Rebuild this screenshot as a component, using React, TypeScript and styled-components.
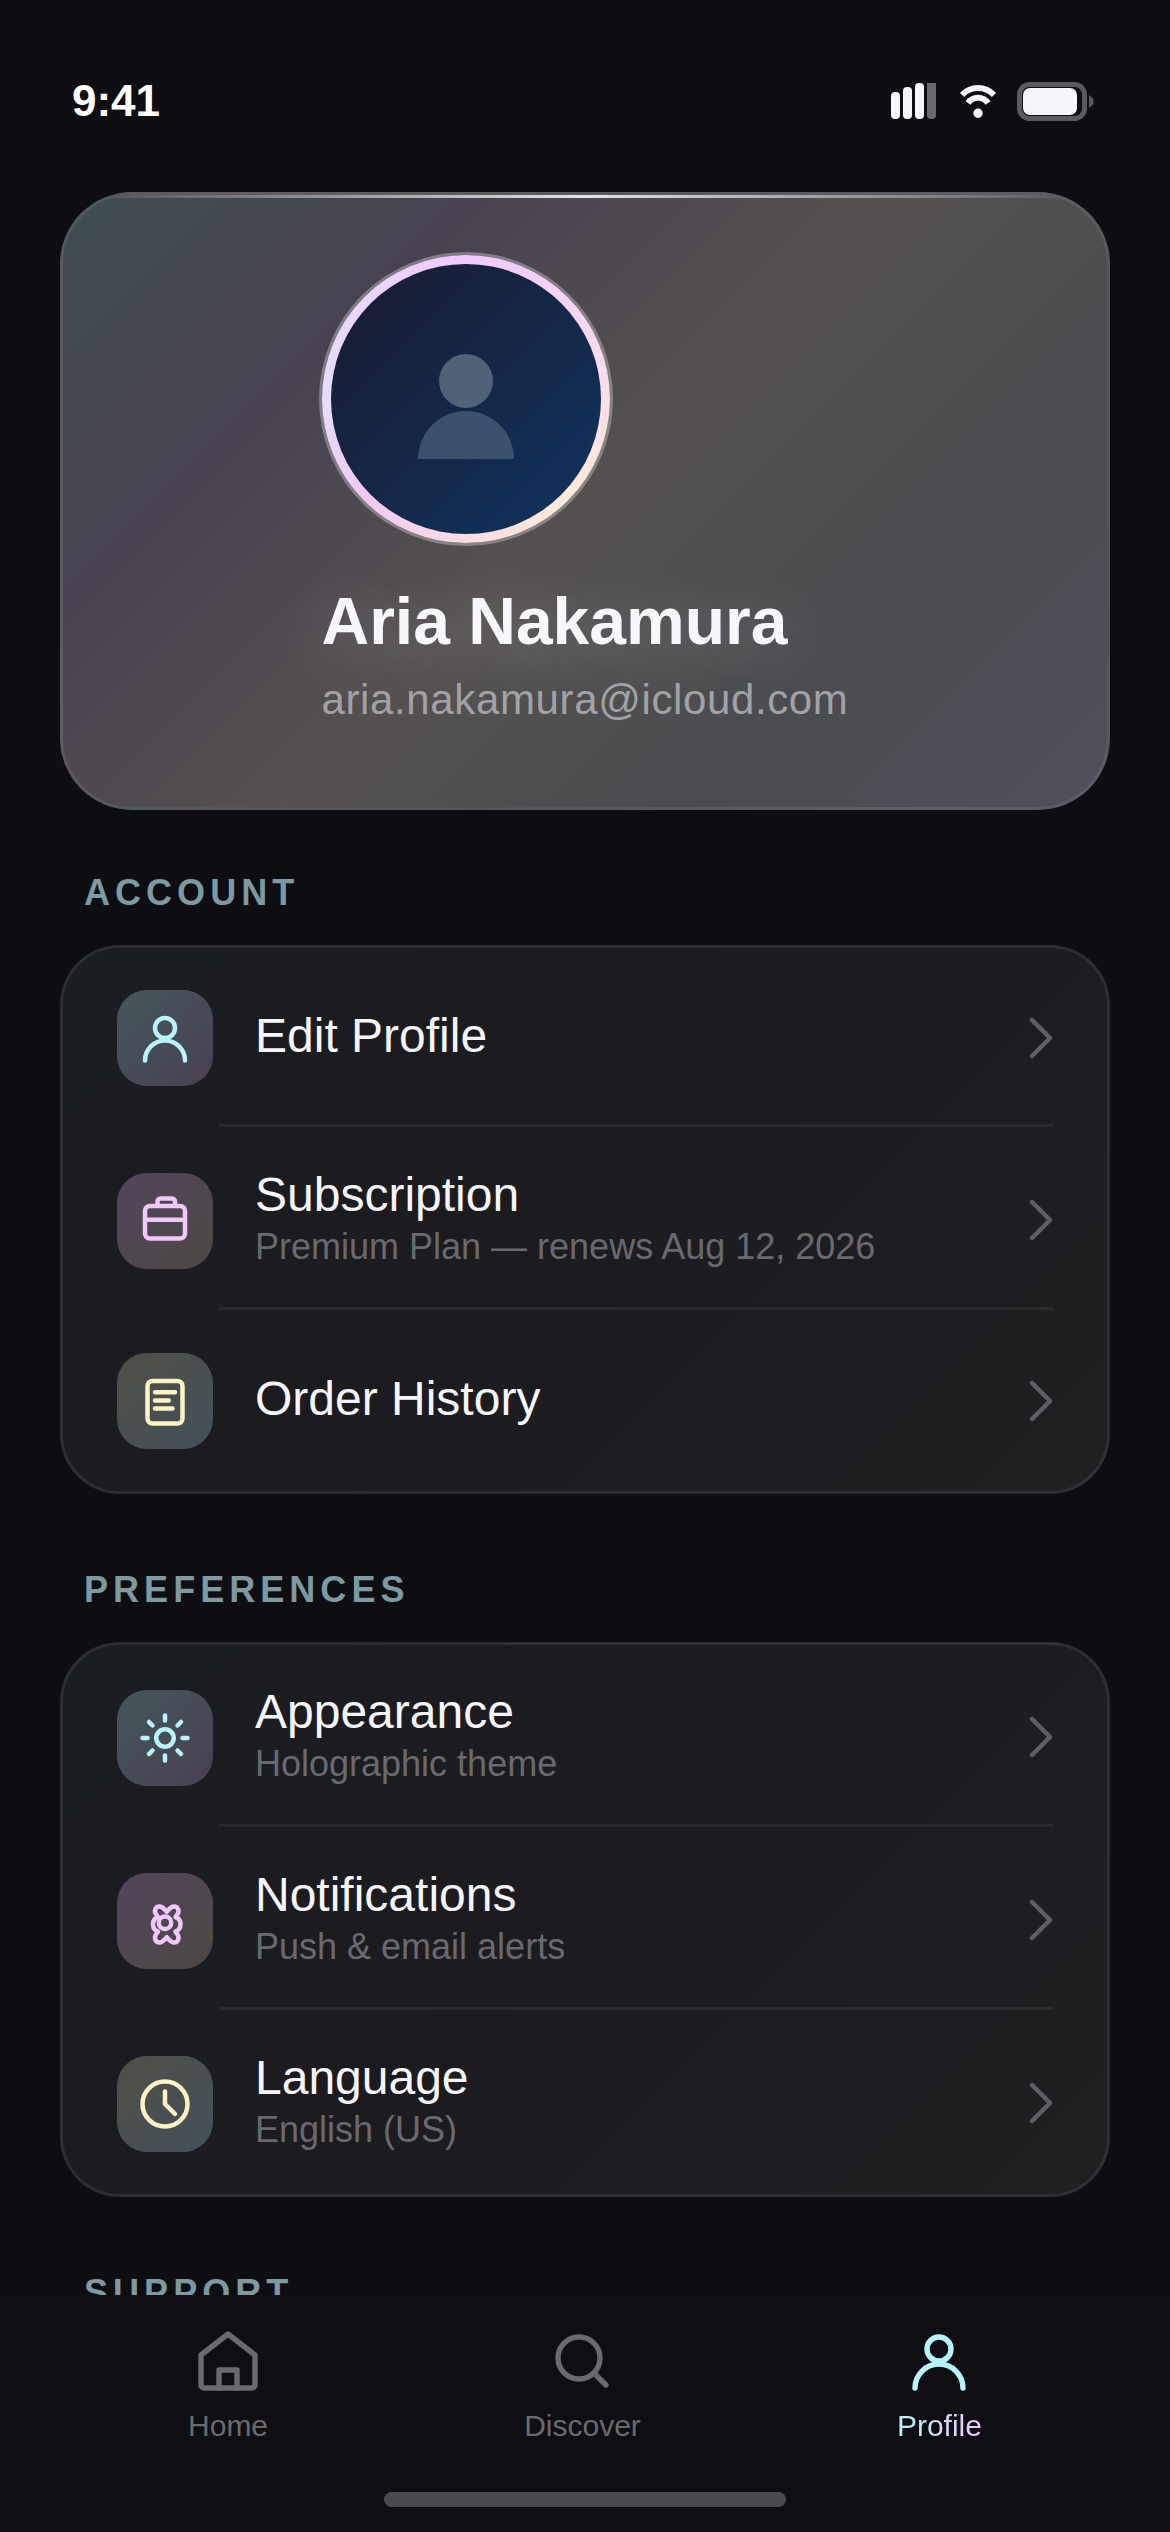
import React from "react";
import styled, { createGlobalStyle } from "styled-components";

const GlobalStyle = createGlobalStyle`
  html, body {
    margin: 0;
    padding: 0;
    background: #0d0d12;
  }
  * {
    box-sizing: border-box;
  }
`;

type Tint = "mint" | "pink" | "cream";

const tints: Record<Tint, { stroke: string; tile: string }> = {
  mint: { stroke: "#b8f4ff", tile: "linear-gradient(135deg, #44575b, #4a4050)" },
  pink: { stroke: "#f0c8ff", tile: "linear-gradient(135deg, #52465c, #4c4843)" },
  cream: { stroke: "#fff3c4", tile: "linear-gradient(135deg, #504f47, #43505a)" },
};

const Screen = styled.div`
  width: 1170px;
  height: 2532px;
  display: flex;
  flex-direction: column;
  overflow: hidden;
  background: #0d0d12;
  font-family: "Liberation Sans", Arial, sans-serif;
  color: #f5f5fa;
`;

const Scroll = styled.main`
  flex: 1;
  min-height: 0;
  overflow: hidden;
`;

const StatusBar = styled.header`
  height: 192px;
  padding: 76px 72px 0;
  display: flex;
  justify-content: space-between;
  align-items: flex-start;
`;

const Clock = styled.span`
  font-size: 44px;
  font-weight: 700;
  color: #ffffff;
`;

const StatusIcons = styled.div`
  display: flex;
  gap: 21px;
  align-items: center;
  height: 50px;
`;

const Hero = styled.section`
  position: relative;
  margin: 0 60px 62px;
  height: 618px;
  padding: 60px 0 0;
  display: flex;
  justify-content: center;
  border: 3px solid rgba(255, 255, 255, 0.08);
  border-radius: 72px;
  overflow: hidden;
  background: linear-gradient(135deg, #3f4d50 0%, #484250 25%, #555150 50%, #4a4c50 75%, #534f5c 100%);

  &::before {
    content: "";
    position: absolute;
    top: 0;
    left: 0;
    right: 0;
    height: 3px;
    background: linear-gradient(90deg, transparent, rgba(255, 255, 255, 0.85), transparent);
  }
`;

const HeroInner = styled.div`
  display: flex;
  flex-direction: column;
  align-items: flex-start;
`;

const AvatarRing = styled.div`
  width: 288px;
  height: 288px;
  padding: 9px;
  border-radius: 50%;
  background: conic-gradient(#efc9ff 0deg, #fadfe6 90deg, #ffead8 135deg, #fbdde4 180deg, #f0c9f2 225deg, #e6dcff 270deg, #ead6ff 315deg, #efc9ff 360deg);
  box-shadow: 0 0 0 3px rgba(255, 255, 255, 0.3);
`;

const Avatar = styled.div`
  width: 100%;
  height: 100%;
  border-radius: 50%;
  display: flex;
  align-items: center;
  justify-content: center;
  background: linear-gradient(135deg, #1a1a2e, #0f3460);
`;

const Name = styled.h1`
  margin: 40px 0 0;
  font-size: 66px;
  font-weight: 700;
  color: #f8f8fc;
  text-shadow: 0 8px 60px rgba(255, 255, 255, 0.25);
`;

const Email = styled.p`
  margin: 17px 0 0;
  font-size: 42px;
  letter-spacing: 0.63px;
  color: #a2a2a6;
`;

const Group = styled.section`
  margin-bottom: 75px;
`;

const GroupLabel = styled.h2`
  margin: 0 0 31px;
  padding-left: 84px;
  font-size: 36px;
  font-weight: 700;
  letter-spacing: 5.04px;
  color: #7c9aa0;
`;

const Card = styled.div`
  margin: 0 60px;
  border: 3px solid rgba(255, 255, 255, 0.08);
  border-radius: 60px;
  overflow: hidden;
  background: linear-gradient(135deg, #1a1d21, #1c1b20 50%, #201f21);
`;

const Row = styled.div<{ $hasSub: boolean }>`
  height: ${(p) => (p.$hasSub ? "183px" : "180px")};
  padding: 0 54px;
  display: flex;
  align-items: center;
  gap: 42px;
`;

const Divider = styled.div`
  height: 3px;
  margin: -4px 54px 1px 156px;
  background: rgba(255, 255, 255, 0.06);
`;

const Tile = styled.div<{ $tint: Tint; $hasSub: boolean }>`
  flex: none;
  width: 96px;
  height: 96px;
  margin-top: ${(p) => (p.$hasSub ? "2px" : "0")};
  border-radius: 30px;
  display: flex;
  align-items: center;
  justify-content: center;
  background: ${(p) => tints[p.$tint].tile};
`;

const RowText = styled.div`
  flex: 1;
  min-width: 0;
  margin-bottom: 5px;
`;

const RowTitle = styled.div`
  font-size: 48px;
  color: #f5f5fa;
`;

const RowSub = styled.div`
  margin-top: 4px;
  font-size: 36px;
  color: #69696f;
`;

const LineIcon = styled.svg<{ $size: number; $color: string }>`
  display: block;
  flex: none;
  width: ${(p) => p.$size}px;
  height: ${(p) => p.$size}px;
  fill: none;
  stroke: ${(p) => p.$color};
  stroke-width: 1.8;
  stroke-linecap: round;
  stroke-linejoin: round;
`;

const Chevron = styled.svg`
  display: block;
  flex: none;
  width: 24px;
  height: 42px;
  fill: none;
  stroke: #5f5f63;
  stroke-width: 1.5;
  stroke-linecap: round;
  stroke-linejoin: round;
`;

const TabBar = styled.nav`
  flex: none;
  height: 237px;
  background: #0e0e13;
  display: flex;
  flex-direction: column;
  align-items: center;
`;

const Tabs = styled.div`
  width: 100%;
  padding: 30px 60px 0;
  display: flex;
  justify-content: space-around;
`;

const Tab = styled.div`
  display: flex;
  flex-direction: column;
  align-items: center;
  gap: 12px;
`;

const TabLabel = styled.span<{ $active?: boolean }>`
  font-size: 30px;
  color: #6a6a6e;
  ${(p) =>
    p.$active &&
    `
    background: linear-gradient(90deg, #b8f4ff, #f0c8ff);
    -webkit-background-clip: text;
    background-clip: text;
    color: transparent;
  `}
`;

const HomeIndicator = styled.div`
  width: 402px;
  height: 15px;
  margin-top: 49px;
  border-radius: 8px;
  background: #4a4a4f;
`;

const icons: Record<string, React.ReactNode> = {
  person: (
    <>
      <circle cx="12" cy="8" r="4" />
      <path d="M4 21c0-4.4 3.6-8 8-8s8 3.6 8 8" />
    </>
  ),
  briefcase: (
    <>
      <rect x="4" y="6" width="16" height="13" rx="2" />
      <path d="M4 11.5h16" />
      <path d="M9 6V4.2c0-.7.5-1.2 1.2-1.2h4.6c.7 0 1.2.5 1.2 1.2V6" />
    </>
  ),
  receipt: (
    <>
      <rect x="5" y="4" width="14" height="17" rx="2" />
      <path d="M8 8.5h8M8 11.8h5.5M8 15h7" />
    </>
  ),
  sun: (
    <>
      <circle cx="12" cy="12" r="3.5" />
      <path d="M12 3v2M12 19v2M3 12h2M19 12h2M5.6 5.6 7 7M17 17l1.4 1.4M5.6 18.4 7 17M17 7l1.4-1.4" />
    </>
  ),
  cog: (
    <>
      <circle cx="12" cy="12.7" r="2.5" />
      <path d="M12.7 8.3C13.4 7.5 14.4 6.2 15.6 6.2C17.2 6.2 17.9 8 17 9.2C16.7 9.6 16.4 10 16.2 10.4C17.4 10.8 18.2 11.9 18.2 13.3C18.2 14.7 17.4 15.8 16.2 16.2C16.4 16.6 16.7 17 17 17.4C17.9 18.8 17.2 20.6 15.6 20.6C14.4 20.6 13.4 19.3 12.7 18.5C12 19.3 11 20.6 9.8 20.6C8.2 20.6 7.5 18.8 8.4 17.4C8.7 17 9 16.6 9.2 16.2C8 15.8 7.2 14.7 7.2 13.3C7.2 11.9 8 10.8 9.2 10.4C9 10 8.7 9.6 8.4 9.2C7.5 8 8.2 6.2 9.8 6.2C11 6.2 12 7.5 12.7 8.3Z" />
    </>
  ),
  clock: (
    <>
      <circle cx="12" cy="12" r="9" />
      <path d="M12 7v5l4 4" />
    </>
  ),
  home: (
    <>
      <path d="M3 10l9-7 9 7v10a1 1 0 0 1-1 1H4a1 1 0 0 1-1-1z" />
      <path d="M9 21v-6h6v6" />
    </>
  ),
  search: (
    <>
      <circle cx="11" cy="11" r="7" />
      <path d="M16 16l4 4" />
    </>
  ),
};

type Item = { icon: string; tint: Tint; title: string; sub?: string };

const groups: { label: string; items: Item[] }[] = [
  {
    label: "ACCOUNT",
    items: [
      { icon: "person", tint: "mint", title: "Edit Profile" },
      { icon: "briefcase", tint: "pink", title: "Subscription", sub: "Premium Plan — renews Aug 12, 2026" },
      { icon: "receipt", tint: "cream", title: "Order History" },
    ],
  },
  {
    label: "PREFERENCES",
    items: [
      { icon: "sun", tint: "mint", title: "Appearance", sub: "Holographic theme" },
      { icon: "cog", tint: "pink", title: "Notifications", sub: "Push & email alerts" },
      { icon: "clock", tint: "cream", title: "Language", sub: "English (US)" },
    ],
  },
  { label: "SUPPORT", items: [] },
];

const tabs = [
  { icon: "home", label: "Home" },
  { icon: "search", label: "Discover" },
  { icon: "person", label: "Profile", active: true },
];

function SignalIcon() {
  return (
    <svg width="48" height="36" viewBox="0 0 48 36">
      <rect x="0" y="9" width="9" height="27" rx="4" fill="#f5f5fa" />
      <rect x="12" y="4" width="9" height="32" rx="4" fill="#f5f5fa" />
      <rect x="24" y="0" width="9" height="36" rx="4" fill="#f5f5fa" />
      <path d="M36 0h9v32a4 4 0 0 1-4 4h-1a4 4 0 0 1-4-4z" fill="#69696d" />
    </svg>
  );
}

function WifiIcon() {
  return (
    <svg width="36" height="34" viewBox="0 0 36 34" fill="none" stroke="#f5f5fa" strokeWidth="6">
      <path d="M2 11A22 22 0 0 1 34 11" />
      <path d="M8 19A12 12 0 0 1 28 19" />
      <circle cx="18" cy="29.3" r="4.7" fill="#f5f5fa" stroke="none" />
    </svg>
  );
}

function BatteryIcon() {
  return (
    <svg width="81" height="39" viewBox="0 0 81 39">
      <rect x="2.5" y="2.5" width="65" height="34" rx="10" fill="none" stroke="#5a5a5f" strokeWidth="5" />
      <rect x="6" y="6" width="54" height="27" rx="7" fill="#f5f5fa" />
      <path d="M72 13l4.5 4v5L72 26z" fill="#5a5a5f" />
    </svg>
  );
}

function AvatarFigure() {
  return (
    <svg width="144" height="144" viewBox="0 0 144 144">
      <circle cx="72" cy="54" r="27" fill="#4f6378" />
      <path d="M24 132a48 48 0 0 1 96 0z" fill="#3b526e" />
    </svg>
  );
}

export default function App() {
  return (
    <Screen>
      <GlobalStyle />
      <Scroll>
        <StatusBar>
          <Clock>9:41</Clock>
          <StatusIcons>
            <SignalIcon />
            <WifiIcon />
            <BatteryIcon />
          </StatusIcons>
        </StatusBar>

        <Hero>
          <HeroInner>
            <AvatarRing>
              <Avatar>
                <AvatarFigure />
              </Avatar>
            </AvatarRing>
            <Name>Aria Nakamura</Name>
            <Email>aria.nakamura@icloud.com</Email>
          </HeroInner>
        </Hero>

        {groups.map((group) => (
          <Group key={group.label}>
            <GroupLabel>{group.label}</GroupLabel>
            {group.items.length > 0 && (
              <Card>
                {group.items.map((item, i) => (
                  <React.Fragment key={item.title}>
                    <Row $hasSub={!!item.sub}>
                      <Tile $tint={item.tint} $hasSub={!!item.sub}>
                        <LineIcon viewBox="0 0 24 24" $size={60} $color={tints[item.tint].stroke}>
                          {icons[item.icon]}
                        </LineIcon>
                      </Tile>
                      <RowText>
                        <RowTitle>{item.title}</RowTitle>
                        {item.sub && <RowSub>{item.sub}</RowSub>}
                      </RowText>
                      <Chevron viewBox="0 0 8 14">
                        <path d="M1 1l6 6-6 6" />
                      </Chevron>
                    </Row>
                    {i < group.items.length - 1 && <Divider />}
                  </React.Fragment>
                ))}
              </Card>
            )}
          </Group>
        ))}
      </Scroll>

      <TabBar>
        <Tabs>
          {tabs.map((tab) => (
            <Tab key={tab.label}>
              <LineIcon viewBox="0 0 24 24" $size={72} $color={tab.active ? "#b8f4ff" : "#6a6a6e"}>
                {icons[tab.icon]}
              </LineIcon>
              <TabLabel $active={tab.active}>{tab.label}</TabLabel>
            </Tab>
          ))}
        </Tabs>
        <HomeIndicator />
      </TabBar>
    </Screen>
  );
}
